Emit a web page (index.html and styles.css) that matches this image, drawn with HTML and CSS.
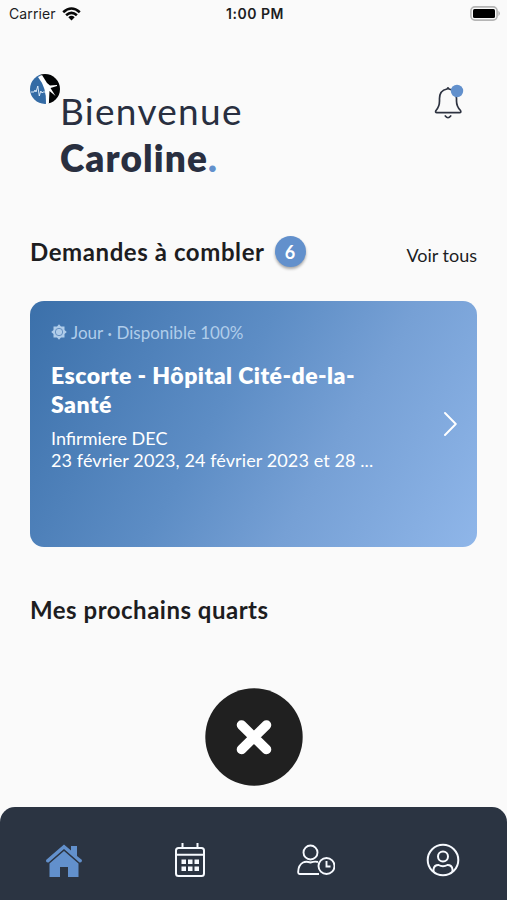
FILE: index.html
```
<!DOCTYPE html>
<html lang="fr">
<head>
<meta charset="utf-8">
<meta name="viewport" content="width=device-width, initial-scale=1">
<title>Accueil</title>
<link rel="stylesheet" href="styles.css">
</head>
<body>
<div class="app">
  <header class="status">
    <div class="carrier"><span>Carrier</span>
      <svg width="19" height="14" viewBox="0 0 19 14" fill="none" stroke="#080808" stroke-width="2.6"><path d="M1.2 5.2Q9.5-2.2 17.8 5.2M4.1 8.3Q9.5 3.5 14.9 8.3"/><path d="M6.3 10.2Q9.5 7.4 12.7 10.2L9.5 13.5Z" fill="#080808" stroke="none"/></svg>
    </div>
    <div class="time">1:00 PM</div>
    <div class="battery"><svg width="31" height="15" viewBox="0 0 31 15"><rect x=".9" y=".9" width="26.2" height="13.2" rx="4" fill="#fafafa" stroke="#b5b5b5" stroke-width="1.6"/><rect x="3" y="3" width="22" height="9" rx="1.5" fill="#000"/><path d="M28.4 4.8Q31.5 7.5 28.4 10.2Z" fill="#b5b5b5"/></svg></div>
  </header>
  <main>
    <section class="greeting">
      <svg class="logo" width="30" height="30" viewBox="0 0 30 30"><defs><clipPath id="disc"><circle cx="15" cy="15" r="15"/></clipPath></defs><g clip-path="url(#disc)"><path fill="#346ba5" d="M0 0H10Q17 12 16 30H0Z"/><path fill="#030405" d="M10 0H30V30H18.5Q19 19 16 12Z"/><path fill="#fff" d="M8 3L12 1L17 9L20 11.500L27 11V12L20.500 14L25.500 22L19.500 17L18.800 30H16Q17 14 8 3Z"/><path d="M1 18H4L5 16L6 18L7.8 12L9.3 22L10.8 17L12 19L13 18H16" fill="none" stroke="#e9f4ff" stroke-width=".9"/></g></svg>
      <h1><span class="welcome">Bienvenue</span><span class="name">Caroline<i>.</i></span></h1>
      <svg class="bell" width="34" height="38" viewBox="0 0 34 38" fill="none" stroke="#2d3240" stroke-width="1.7" stroke-linecap="round" stroke-linejoin="round"><path d="M4 26.5Q7.5 22.5 7.5 17V14.5Q7.5 6.5 15 5L16 3.8L17 5Q24.500 6.500 24.500 14.500V17Q24.500 22.500 28.500 26.500Q29.500 28.600 27.500 28.600H5Q2.800 28.600 4 26.500Z"/><path d="M13.300 32Q16 35.500 18.700 32"/><circle cx="25" cy="7" r="6.200" fill="#6290cc" stroke="none"/></svg>
    </section>
    <section class="section-head"><h2 class="requests">Demandes à combler</h2><span class="count">6</span><a class="all">Voir tous</a></section>
    <article class="card">
      <div class="card-text">
        <div class="tag"><svg width="16" height="16" viewBox="-8 -8 16 16" fill="currentColor"><path d="M0-7.800L2-5.500L5.500-5.500L5.500-2L7.800 0L5.500 2V5.500H2L0 7.800L-2 5.500H-5.500V2L-7.800 0L-5.500-2V-5.500H-2Z"/><circle r="3.700" fill="none" stroke="#527fb5" stroke-width=".8"/></svg><span>Jour <b>•</b> Disponible 100%</span></div>
        <h3>Escorte - Hôpital Cité-de-la-<br>Santé</h3>
        <p class="role">Infirmiere DEC</p>
        <p class="dates">23 février 2023, 24 février 2023 et 28 ...</p>
      </div>
      <svg class="chevron" width="14" height="26" viewBox="0 0 14 26" fill="none" stroke="#fff" stroke-width="1.900" stroke-linecap="round" stroke-linejoin="round"><path d="M2 2L12.800 13L2 24"/></svg>
    </article>
    <h2 class="shifts">Mes prochains quarts</h2>
    <div class="empty"><svg width="98" height="98" viewBox="0 0 98 98"><circle cx="49" cy="49" r="48.700" fill="#202020"/><path d="M36.500 37L61.500 61.500M61.500 37L36.500 61.500" stroke="#fff" stroke-width="9.600" stroke-linecap="round"/></svg></div>
  </main>
  <nav>
    <svg width="38" height="36" viewBox="0 0 38 36" fill="#6290cc"><path d="M1 18L19 2.500L26 8.500V4H32V14L37 18Q37 21 34.500 20.500L19 7L3.500 20.500Q.700 21 1 18Z"/><path d="M4.500 21.500L19 9L33.500 21.500V35H23V25H15V35H4.500Z"/></svg>
    <svg width="32" height="36" viewBox="0 0 32 36" fill="none" stroke="#f7faff" stroke-width="2"><rect x="2" y="6" width="28" height="28" rx="2.500"/><path d="M2 12.800H30M8.500 1V6M23.500 1V6"/><path d="M7.500 17.500h4.500v4.500h-4.500zM14 17.500h4.500v4.500H14zM20.500 17.500H25v4.500h-4.500zM7.500 24.500h4.500V29h-4.500zM14 24.500h4.500V29H14zM20.500 24.500H25V29h-4.500z" fill="#f7faff" stroke="none"/></svg>
    <svg width="38" height="32" viewBox="0 0 38 32" fill="none" stroke="#f7faff" stroke-width="1.900"><circle cx="13.500" cy="8.500" r="7"/><path d="M21 18Q18 17 13.500 18.500Q9 17 6 18.500Q1.500 21 1.200 27.500V28.500Q1.200 30 2.700 30H22"/><circle cx="29.500" cy="22" r="8"/><path d="M29.500 17V22.500H33.500"/></svg>
    <svg width="34" height="34" viewBox="0 0 34 34" fill="none" stroke="#f7faff" stroke-width="2"><circle cx="17" cy="17" r="15.300"/><circle cx="17" cy="13.500" r="5"/><path d="M7.500 29V26.500Q8 22 12.500 22Q17 24.500 21.500 22Q26 22 26.500 26.500V29"/></svg>
  </nav>
</div>
</body>
</html>
```
FILE: styles.css
```
* { box-sizing: border-box; }
body { margin: 0; background: #fafafa; font-family: Lato, sans-serif; color: #1d1d1f; }
svg { display: block; flex: none; }
h1, h2, h3, p { margin: 0; white-space: nowrap; }
.app { width: 507px; height: 900px; display: flex; flex-direction: column; overflow: hidden; }
.status { height: 28px; display: grid; grid-template-columns: 1fr auto 1fr; align-items: center; padding: 0 6px 1px 9px; font: 14px Inter, sans-serif; }
.carrier { display: flex; align-items: center; gap: 6px; letter-spacing: .1px; }
.time { font-weight: 600; letter-spacing: .5px; }
.battery { justify-self: end; }
main { flex: 1; padding: 46px 30px 0; }
.greeting { display: flex; height: 162px; align-items: flex-start; }
h1 { padding-top: 13px; line-height: 47px; font-size: 37px; color: #292f40; flex: 1; }
h1 span { display: block; }
.welcome { font-weight: 400; letter-spacing: 1.3px; }
.name { font-weight: 800; letter-spacing: 1.1px; }
h1 i { color: #6290cc; font-style: normal; }
.bell { margin: 10px 11px 0 0; }
.section-head { display: flex; align-items: center; height: 32px; }
h2 { font-size: 24px; line-height: 32px; font-weight: 700; letter-spacing: .5px; }
.requests { letter-spacing: .58px; }
.count { width: 31px; height: 31px; margin: -1px 0 0 10px; border-radius: 50%; background: #6290cc; color: #fff; display: grid; place-items: center; font-size: 18px; font-weight: 700; box-shadow: 0 2px 3px #0005; }
.all { margin: 5px 0 0 auto; font-size: 18px; }
.card { height: 246px; margin-top: 33px; padding: 20px 21px; border-radius: 14px; background: linear-gradient(120deg, #3b70aa 0%, #5d8dc5 43%, #76a0d5 66%, #8fb6e9 100%); color: #fff; display: flex; align-items: center; justify-content: space-between; }
.card-text { align-self: flex-start; }
.tag { display: flex; align-items: center; gap: 4px; height: 22px; color: #b0cdea; font-size: 17px; }
.tag b { font: 13px "Open Sans", sans-serif; }
h3 { margin-top: 18px; font-size: 23px; line-height: 29px; font-weight: 800; letter-spacing: .46px; }
.role { margin-top: 8px; }
.card p { font-size: 18px; line-height: 22px; }
.card .dates { letter-spacing: .1px; }
.chevron { margin-right: -1px; }
.shifts { margin-top: 47px; }
.empty { display: flex; justify-content: center; margin-top: 62px; }
nav { height: 93px; background: #2b3442; border-radius: 15px 15px 0 0; display: flex; justify-content: space-between; align-items: center; padding: 13px 47px 0 45px; }
```
